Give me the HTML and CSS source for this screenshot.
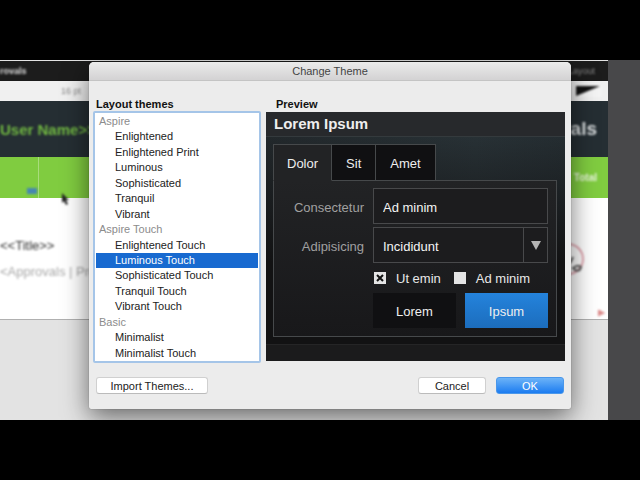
FILE: index.html
```html
<!DOCTYPE html>
<html lang="en">
<head>
<meta charset="utf-8">
<title>Change Theme</title>
<link rel="stylesheet" href="styles.css">
</head>
<body>
<main class="stage">
  <div class="desk">
    <section class="editor">
      <div class="menubar"><span>rovals</span><span class="dim">Layout</span></div>
      <div class="toolbar">
        <span class="size">16 pt</span>
        <svg class="swatch" viewBox="0 0 28 12" width="28" height="12"><rect width="28" height="12" fill="#f4f4f4"/><path d="M2 1H26L2 11Z" fill="#111"/></svg>
      </div>
      <div class="hero"><span class="user">User Name&gt;&gt;</span><span class="approvals">Approvals</span></div>
      <div class="band"><div class="cell"><i class="chip"></i></div><span class="total">Total</span></div>
      <div class="page">
        <div class="text"><div class="doc-title">&lt;&lt;Title&gt;&gt;</div><div class="doc-sub">&lt;Approvals | Project</div></div>
        <svg class="gauge" viewBox="0 0 54 90" width="54" height="90"><circle cx="14" cy="25" r="15" fill="none" stroke="#d98b98" stroke-width="1.5"/><path d="M16 29l3-6M19 34q5-4 8-1q-1 5-6 3z" fill="none" stroke="#555" stroke-width="2"/><path d="M45 77l4 2-4 2z" fill="none" stroke="#dc8a8a" stroke-width="2"/></svg>
      </div>
    </section>
    <svg class="pointer" viewBox="0 0 8 13" width="8" height="13"><path d="M1 0V10L3 8L5 12L7 11L5 7H8Z" fill="#222"/></svg>
  </div>

  <form class="dialog">
    <h1 class="titlebar">Change Theme</h1>
    <div class="content">
      <section class="themes">
        <h2 id="themes-label">Layout themes</h2>
        <ul class="list" role="listbox" aria-labelledby="themes-label">
          <li class="group">Aspire</li>
          <li role="option">Enlightened</li>
          <li role="option">Enlightened Print</li>
          <li role="option">Luminous</li>
          <li role="option">Sophisticated</li>
          <li role="option">Tranquil</li>
          <li role="option">Vibrant</li>
          <li class="group">Aspire Touch</li>
          <li role="option">Enlightened Touch</li>
          <li role="option" class="selected" aria-selected="true">Luminous Touch</li>
          <li role="option">Sophisticated Touch</li>
          <li role="option">Tranquil Touch</li>
          <li role="option">Vibrant Touch</li>
          <li class="group">Basic</li>
          <li role="option">Minimalist</li>
          <li role="option">Minimalist Touch</li>
        </ul>
      </section>
      <section class="preview-side">
        <h2 class="preview-label">Preview</h2>
        <div class="preview">
          <h3>Lorem Ipsum</h3>
          <div class="sample">
            <div class="tabs" role="tablist">
              <button type="button" role="tab" class="tab active" aria-selected="true">Dolor</button>
              <button type="button" role="tab" class="tab">Sit</button>
              <button type="button" role="tab" class="tab">Amet</button>
            </div>
            <div class="panel">
              <label for="cons">Consectetur</label>
              <input class="field" id="cons" type="text" value="Ad minim">
              <label for="adip">Adipisicing</label>
              <div class="select-wrap">
                <select class="field" id="adip"><option>Incididunt</option></select>
                <span class="arrow"><svg viewBox="0 0 10 9" width="10" height="9"><path d="M0 0H10L5 9Z" fill="#b4b4b4"/></svg></span>
              </div>
              <div class="checks">
                <label><span class="box"><input type="checkbox" checked><svg viewBox="0 0 12 12" width="12" height="12"><path d="M3 3L9 9M9 3L3 9" stroke="#111" stroke-width="2"/></svg></span>Ut emin</label>
                <label><span class="box"><input type="checkbox"><svg viewBox="0 0 12 12" width="12" height="12"><path d="M3 3L9 9M9 3L3 9" stroke="#111" stroke-width="2"/></svg></span>Ad minim</label>
              </div>
              <div class="actions">
                <button type="button" class="action">Lorem</button>
                <button type="button" class="action primary">Ipsum</button>
              </div>
            </div>
          </div>
          <div class="preview-foot"></div>
        </div>
      </section>
    </div>
    <div class="footer">
      <button type="button" class="push import">Import Themes...</button>
      <button type="button" class="push">Cancel</button>
      <button type="button" class="push default">OK</button>
    </div>
  </form>
</main>
</body>
</html>
```
FILE: styles.css
```css
* { box-sizing: border-box; }
body {
  margin: 0;
  min-height: 100vh;
  padding: 60px 0;
  display: grid;
  background: #000;
  font-family: "Liberation Sans", Arial, sans-serif;
  font-size: 13px;
  color: #222;
}
h1, h2, h3, ul { margin: 0; padding: 0; }
button, input, select { font: inherit; margin: 0; }

.stage { position: relative; overflow: hidden; display: grid; }
.desk {
  position: relative;
  padding-right: 32px;
  background: #48484a;
  display: grid;
}
.editor {
  background: #e3e3e3;
  display: flex;
  flex-direction: column;
  overflow: hidden;
}
.editor span, .text, .chip, .gauge, .pointer, .swatch { filter: blur(1px); }
.menubar {
  height: 20px;
  margin-top: 1px;
  padding-right: 13px;
  display: flex;
  align-items: center;
  justify-content: space-between;
  background: #1c1c1c;
  color: #ddd;
  font-size: 9px;
  font-weight: bold;
}
.menubar .dim { color: #888; font-weight: normal; }
.toolbar {
  height: 20px;
  padding: 0 6px 0 61px;
  display: flex;
  align-items: center;
  justify-content: space-between;
  background: #f0f0f0;
  color: #888;
  font-size: 9px;
}
.hero {
  height: 56px;
  padding-right: 11px;
  display: flex;
  align-items: center;
  justify-content: space-between;
  background: #252e33;
}
.user { color: #71b842; font-size: 15px; font-weight: bold; }
.approvals { color: #d8dcde; font-size: 19px; font-weight: bold; }
.band {
  height: 41px;
  padding-right: 11px;
  display: flex;
  align-items: center;
  justify-content: space-between;
  background: #80cc40;
}
.cell {
  width: 39px;
  height: 100%;
  padding: 0 1px 4px 0;
  border-right: 1px solid #a8dc7c;
  display: flex;
  align-items: end;
  justify-content: end;
}
.chip { width: 10px; height: 6px; background: #4687b0; }
.total { color: #eaf6df; font-size: 10px; font-weight: bold; }
.page {
  height: 122px;
  display: flex;
  justify-content: space-between;
  background: #fff;
  border-bottom: 1px solid #b0b0b0;
}
.text { padding-top: 39px; white-space: nowrap; }
.doc-title { line-height: 18px; color: #333; }
.doc-sub { padding-top: 8px; line-height: 18px; color: #a8a8a8; }
.gauge { margin-top: 36px; }
.pointer { position: absolute; left: 61px; top: 133px; }

.dialog {
  position: absolute;
  left: 89px;
  right: 69px;
  top: 2px;
  background: #ececec;
  border-radius: 5px 5px 2px 2px;
  box-shadow: 0 8px 26px rgba(0, 0, 0, .55), 0 0 1px rgba(0, 0, 0, .5);
}
.titlebar {
  height: 19px;
  line-height: 19px;
  text-align: center;
  font-size: 11px;
  font-weight: normal;
  color: #444;
  border-bottom: 1px solid #c4c4c4;
  border-radius: 5px 5px 0 0;
  background: linear-gradient(#ebebeb, #d3d2d3);
}
.content {
  display: grid;
  grid-template-columns: 168px 1fr;
  gap: 5px;
  padding: 16px 6px 0 4px;
}
h2 { font-size: 11px; line-height: 14px; color: #111; }
.themes { display: flex; flex-direction: column; }
.themes h2 { padding-left: 3px; }
.list {
  flex: 1;
  display: grid;
  grid-auto-rows: 1fr;
  list-style: none;
  background: #fff;
  border: 2px solid #a5c5e8;
  border-radius: 2px;
  padding: 1px 1px 0;
  font-size: 11px;
  line-height: 15px;
}
.list li { padding-left: 19px; }
.list .group { padding-left: 3px; color: #8c8c8c; }
.list .selected { background: #186ad0; color: #fff; }

.preview-side { padding-bottom: 2px; }
.preview-label { padding-left: 10px; margin-bottom: 1px; }
.preview {
  background: linear-gradient(rgba(18, 18, 19, 0), #121213 60%),
    linear-gradient(90deg, #252c30, #2c373c 70%, #283237);
  color: #e8e8e8;
}
h3 {
  height: 25px;
  line-height: 24px;
  padding-left: 8px;
  font-size: 15px;
  color: #eee;
  background: #27292c;
  border-bottom: 1px solid #343a3d;
}
.sample { padding: 7px 8px 7px 7px; }
.tabs { display: flex; position: relative; }
.tab {
  height: 37px;
  padding: 2px 14px 0;
  margin-bottom: -1px;
  border: 1px solid #46494b;
  border-left-width: 0;
  background: #101012;
  color: #eee;
}
.tab.active {
  padding: 2px 13px 0;
  border-left-width: 1px;
  border-bottom-color: #222325;
  background: #222325;
}
.panel {
  display: grid;
  grid-template-columns: 90px 1fr;
  column-gap: 9px;
  row-gap: 3px;
  align-items: center;
  padding: 7px 8px 8px 0;
  border: 1px solid #46494b;
  background: linear-gradient(#222325, #18181a);
}
.panel > label { padding-top: 2px; text-align: right; color: #a0a0a0; }
.field {
  display: block;
  width: 100%;
  min-width: 0;
  height: 36px;
  padding: 2px 9px 0;
  border: 1px solid #48494b;
  border-radius: 0;
  background: #1c1c1e;
  color: #f4f4f4;
  appearance: none;
}
.select-wrap { position: relative; }
.arrow {
  position: absolute;
  inset: 1px 1px 1px auto;
  width: 24px;
  display: grid;
  place-items: center;
  border-left: 1px solid #48494b;
  pointer-events: none;
}
.checks, .actions { grid-column: 2; display: flex; }
.checks { height: 24px; padding-left: 1px; align-items: center; gap: 13px; }
.checks label { display: flex; align-items: center; gap: 10px; white-space: nowrap; }
.box { display: grid; }
.box > * { grid-area: 1 / 1; }
.box svg { visibility: hidden; pointer-events: none; }
.box input:checked + svg { visibility: visible; }
.box input {
  appearance: none;
  width: 12px;
  height: 12px;
  background: #e4e4e4;
}
.actions { gap: 9px; }
.action {
  flex: 1;
  height: 35px;
  padding: 2px 0 0;
  border: 0;
  background: #101012;
  color: #eee;
}
.action.primary { background: linear-gradient(#2483dc, #1c6dbd); }
.preview-foot { height: 17px; background: #1b1b1c; border-top: 1px solid #252526; }

.footer {
  display: flex;
  gap: 10px;
  padding: 14px 7px 15px;
}
.push {
  width: 68px;
  height: 17px;
  padding: 0;
  border: 1px solid #d0d0d0;
  border-bottom-color: #bbb;
  border-radius: 3px;
  background: #fff;
  color: #222;
  font-size: 11px;
  line-height: 14px;
}
.import { width: 112px; margin-right: auto; }
.default { border-color: #4a97ea; background: linear-gradient(#6cb3f8, #1c7cf0); color: #fff; }
```
